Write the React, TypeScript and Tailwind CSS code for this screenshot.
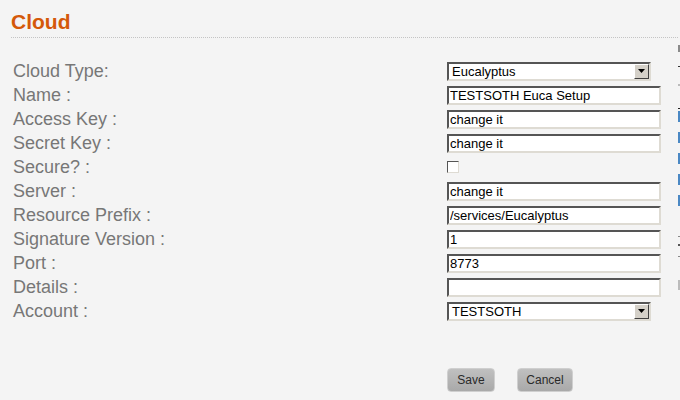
import React from "react";

const inputCls =
  "h-[19px] w-[214px] bg-white border-2 border-t-[#555] border-l-[#555] border-b-[#dedbd3] border-r-[#dedbd3] px-[1px] text-[13px] leading-[15px] text-black font-['Liberation_Sans',Arial,sans-serif] outline-none";

function TextInput({ value }: { value: string }) {
  return <input className={inputCls} defaultValue={value} readOnly />;
}

function Select({ value }: { value: string }) {
  return (
    <div className="h-[19px] w-[204px] bg-white border-2 border-t-[#555] border-l-[#555] border-b-[#dedbd3] border-r-[#dedbd3] flex items-center">
      <span className="flex-1 pl-[3px] text-[13px] leading-[15px] text-black">{value}</span>
      <span className="h-[15px] w-[15px] bg-[#d4d0c8] border border-t-white border-l-white border-b-[#404040] border-r-[#404040] flex items-center justify-center">
        <svg width="7" height="4" viewBox="0 0 7 4">
          <polygon points="0,0 7,0 3.5,4" fill="#000" />
        </svg>
      </span>
    </div>
  );
}

function Row({ label, children }: { label: string; children: React.ReactNode }) {
  return (
    <div className="flex h-[24px] items-center">
      <div className="w-[436px] pl-[2px] text-[18px] leading-[24px] text-[#777]">{label}</div>
      <div className="flex items-center">{children}</div>
    </div>
  );
}

function Btn({ label, w }: { label: string; w: string }) {
  return (
    <button
      className={`${w} h-[24px] rounded-[4px] border border-[#cfcfcf] bg-gradient-to-b from-[#c0c0c0] to-[#a9a9a9] text-[12px] text-[#2a2a2a] font-['Liberation_Sans',Arial,sans-serif]`}
    >
      {label}
    </button>
  );
}

export default function App() {
  return (
    <div className="w-[680px] h-[400px] bg-[#f4f4f4] flex overflow-hidden font-['Liberation_Sans',Arial,sans-serif]">
      <div className="w-[678px] pl-[11px]">
        <h1 className="mt-[10px] text-[21px] leading-[24px] font-bold text-[#d4590a]">Cloud</h1>
        <div className="mt-[3px] border-t border-dotted border-[#c4c4c4]" />
        <div className="mt-[21px] flex flex-col">
          <Row label="Cloud Type:">
            <Select value="Eucalyptus" />
          </Row>
          <Row label="Name :">
            <TextInput value="TESTSOTH Euca Setup" />
          </Row>
          <Row label="Access Key :">
            <TextInput value="change it" />
          </Row>
          <Row label="Secret Key :">
            <TextInput value="change it" />
          </Row>
          <Row label="Secure? :">
            <span className="h-[12px] w-[12px] bg-white border border-t-[#555] border-l-[#555] border-b-[#dedbd3] border-r-[#dedbd3]" />
          </Row>
          <Row label="Server :">
            <TextInput value="change it" />
          </Row>
          <Row label="Resource Prefix :">
            <TextInput value="/services/Eucalyptus" />
          </Row>
          <Row label="Signature Version :">
            <TextInput value="1" />
          </Row>
          <Row label="Port :">
            <TextInput value="8773" />
          </Row>
          <Row label="Details :">
            <TextInput value="" />
          </Row>
          <Row label="Account :">
            <Select value="TESTSOTH" />
          </Row>
        </div>
        <div className="mt-[45px] pl-[436px] flex gap-[22px]">
          <Btn label="Save" w="w-[48px]" />
          <Btn label="Cancel" w="w-[56px]" />
        </div>
      </div>
      <div className="w-[2px] flex flex-col items-end">
        <div className="mt-[45px] h-[7px] w-[2px] bg-[#8a8a8a]" />
        <div className="mt-[14px] h-[1px] w-[2px] bg-[#333]" />
        <div className="mt-[17px] h-[2px] w-[2px] bg-[#bbb]" />
        <div className="mt-[22px] h-[1px] w-[2px] bg-[#222]" />
        <div className="mt-[2px] h-[11px] w-[2px] bg-[#4a88c4]" />
        <div className="mt-[10px] h-[11px] w-[2px] bg-[#4a88c4]" />
        <div className="mt-[10px] h-[11px] w-[2px] bg-[#4a88c4]" />
        <div className="mt-[10px] h-[11px] w-[2px] bg-[#4a88c4]" />
        <div className="mt-[10px] h-[11px] w-[2px] bg-[#4a88c4]" />
        <div className="mt-[30px] h-[1px] w-[2px] bg-[#888]" />
        <div className="mt-[7px] h-[2px] w-[2px] bg-[#555]" />
        <div className="mt-[10px] h-[1px] w-[2px] bg-[#888]" />
        <div className="mt-[23px] h-[10px] w-[2px] bg-[#bbb]" />
      </div>
    </div>
  );
}
